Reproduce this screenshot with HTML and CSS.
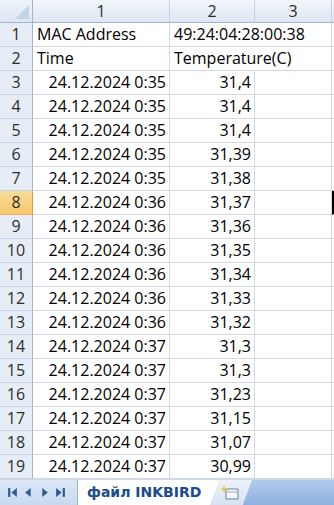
FILE: index.html
```html
<!DOCTYPE html>
<html lang="ru">
  <head>
    <meta charset="UTF-8" />
    <meta name="viewport" content="width=device-width, initial-scale=1.0" />
    <title>файл INKBIRD</title>
    <link rel="stylesheet" href="styles.css">
  </head>
  <body>
    <div class="sheet">
      <!-- column headers -->
      <div class="corner"><span class="corner-tri"></span></div>
      <div class="colhead">1</div>
      <div class="colhead">2</div>
      <div class="colhead">3</div>
      <div class="colhead"></div>

      <div class="rowhead">1</div>
      <div class="cell">MAC Address</div>
      <div class="cell spill">49:24:04:28:00:38</div>
      <div class="cell"></div>
      <div class="cell"></div>

      <div class="rowhead">2</div>
      <div class="cell">Time</div>
      <div class="cell spill">Temperature(C)</div>
      <div class="cell"></div>
      <div class="cell"></div>

      <div class="rowhead">3</div>
      <div class="cell num">24.12.2024 0:35</div>
      <div class="cell num">31,4</div>
      <div class="cell"></div>
      <div class="cell"></div>

      <div class="rowhead">4</div>
      <div class="cell num">24.12.2024 0:35</div>
      <div class="cell num">31,4</div>
      <div class="cell"></div>
      <div class="cell"></div>

      <div class="rowhead">5</div>
      <div class="cell num">24.12.2024 0:35</div>
      <div class="cell num">31,4</div>
      <div class="cell"></div>
      <div class="cell"></div>

      <div class="rowhead">6</div>
      <div class="cell num">24.12.2024 0:35</div>
      <div class="cell num">31,39</div>
      <div class="cell"></div>
      <div class="cell"></div>

      <div class="rowhead">7</div>
      <div class="cell num">24.12.2024 0:35</div>
      <div class="cell num">31,38</div>
      <div class="cell"></div>
      <div class="cell"></div>

      <div class="rowhead current">8</div>
      <div class="cell num">24.12.2024 0:36</div>
      <div class="cell num">31,37</div>
      <div class="cell"></div>
      <div class="cell active"></div>

      <div class="rowhead">9</div>
      <div class="cell num">24.12.2024 0:36</div>
      <div class="cell num">31,36</div>
      <div class="cell"></div>
      <div class="cell"></div>

      <div class="rowhead">10</div>
      <div class="cell num">24.12.2024 0:36</div>
      <div class="cell num">31,35</div>
      <div class="cell"></div>
      <div class="cell"></div>

      <div class="rowhead">11</div>
      <div class="cell num">24.12.2024 0:36</div>
      <div class="cell num">31,34</div>
      <div class="cell"></div>
      <div class="cell"></div>

      <div class="rowhead">12</div>
      <div class="cell num">24.12.2024 0:36</div>
      <div class="cell num">31,33</div>
      <div class="cell"></div>
      <div class="cell"></div>

      <div class="rowhead">13</div>
      <div class="cell num">24.12.2024 0:36</div>
      <div class="cell num">31,32</div>
      <div class="cell"></div>
      <div class="cell"></div>

      <div class="rowhead">14</div>
      <div class="cell num">24.12.2024 0:37</div>
      <div class="cell num">31,3</div>
      <div class="cell"></div>
      <div class="cell"></div>

      <div class="rowhead">15</div>
      <div class="cell num">24.12.2024 0:37</div>
      <div class="cell num">31,3</div>
      <div class="cell"></div>
      <div class="cell"></div>

      <div class="rowhead">16</div>
      <div class="cell num">24.12.2024 0:37</div>
      <div class="cell num">31,23</div>
      <div class="cell"></div>
      <div class="cell"></div>

      <div class="rowhead">17</div>
      <div class="cell num">24.12.2024 0:37</div>
      <div class="cell num">31,15</div>
      <div class="cell"></div>
      <div class="cell"></div>

      <div class="rowhead">18</div>
      <div class="cell num">24.12.2024 0:37</div>
      <div class="cell num">31,07</div>
      <div class="cell"></div>
      <div class="cell"></div>

      <div class="rowhead">19</div>
      <div class="cell num">24.12.2024 0:37</div>
      <div class="cell num">30,99</div>
      <div class="cell"></div>
      <div class="cell"></div>
    </div>

    <!-- sheet tabs -->
    <div class="tabbar">
      <div class="tabnav">
        <svg width="11" height="11" viewBox="0 0 10 10"><rect x="1" y="1" width="2" height="8" fill="#2f5a96"/><path d="M9 1 L4 5 L9 9 Z" fill="#2f5a96"/></svg>
        <svg width="11" height="11" viewBox="0 0 10 10"><path d="M7 1 L2 5 L7 9 Z" fill="#2f5a96"/></svg>
        <svg width="11" height="11" viewBox="0 0 10 10"><path d="M3 1 L8 5 L3 9 Z" fill="#2f5a96"/></svg>
        <svg width="11" height="11" viewBox="0 0 10 10"><path d="M1 1 L6 5 L1 9 Z" fill="#2f5a96"/><rect x="7" y="1" width="2" height="8" fill="#2f5a96"/></svg>
      </div>
      <div class="tab-active">файл INKBIRD</div>
      <div class="tab-insert">
        <svg width="22" height="18" viewBox="0 0 22 18">
          <path d="M6 5 H18 V15 H6 Z" fill="#f4f7fb" stroke="#6a7f9c" stroke-width="1"/>
          <path d="M6 8 H18" stroke="#9aaac0" stroke-width="1"/>
          <path d="M4 1 L5 4 L8 5 L5 6 L4 9 L3 6 L0 5 L3 4 Z" fill="#f4c33a"/>
        </svg>
      </div>
      <div class="tabfill"></div>
    </div>
  </body>
</html>
```

FILE: styles.css
```css
html,
body {
  overflow: hidden;
}
body {
  margin: 0;
  padding: 0;
  background-color: #fff;
  font-family: "Open Sans", "Liberation Sans", sans-serif;
  font-size: 16px;
  color: #000;
}

/* Grid of cells */
.sheet {
  display: grid;
  grid-template-columns: 33px 137px 85px 77px 1fr;
  grid-template-rows: 23px repeat(19, 24px);
}

.sheet > div {
  box-sizing: border-box;
  white-space: nowrap;
  line-height: 23px;
}

.corner {
  background: linear-gradient(#eef3fa, #dde6f2);
  border-right: 1px solid #9eb6ce;
  border-bottom: 1px solid #9eb6ce;
  position: relative;
}
.corner-tri {
  position: absolute;
  right: 3px;
  bottom: 3px;
  width: 0;
  height: 0;
  border-left: 14px solid transparent;
  border-bottom: 14px solid #c4d3e7;
}

.colhead {
  background: linear-gradient(#f2f6fb, #dfe7f2);
  border-right: 1px solid #c3d1e4;
  border-bottom: 1px solid #9eb6ce;
  text-align: center;
  color: #2d2d2d;
  line-height: 22px;
}

.rowhead {
  background-color: #e6edf7;
  border-right: 1px solid #9eb6ce;
  border-bottom: 1px solid #c5d3e6;
  text-align: center;
  color: #2d2d2d;
}
.rowhead.current {
  background: linear-gradient(#fbdc9c, #f5c66c);
  border-right: 1px solid #f29536;
  border-bottom: 1px solid #f2b25a;
}

.cell {
  border-right: 1px solid #d0d7e5;
  border-bottom: 1px solid #d0d7e5;
  padding: 0 4px;
}
.cell.num {
  text-align: right;
  padding: 0 3px 0 0;
}
.cell.spill {
  border-right-color: transparent;
}
.cell.active {
  border-left: 2px solid #000;
}

/* Sheet tabs */
.tabbar {
  display: flex;
  height: 26px;
  border-top: 1px solid #d0d7e5;
  box-sizing: border-box;
}

.tabnav {
  width: 78px;
  display: flex;
  align-items: center;
  gap: 5px;
  padding-left: 7px;
  box-sizing: border-box;
  background: linear-gradient(#dde8f6, #c8d9f0);
  border-right: 1px solid #9eb6ce;
}

.tab-active {
  width: 140px;
  padding-left: 9px;
  box-sizing: border-box;
  background-color: #fff;
  font-family: "DejaVu Sans", "Liberation Sans", sans-serif;
  font-weight: bold;
  font-size: 14px;
  line-height: 25px;
  color: #1a4b8c;
  clip-path: polygon(0 0, 100% 0, 94% 100%, 0 100%);
}

.tab-insert {
  width: 42px;
  margin-left: -8px;
  display: flex;
  align-items: center;
  justify-content: center;
  background: linear-gradient(#eef3fa, #d6e2f2);
  clip-path: polygon(22% 0, 100% 0, 78% 100%, 0 100%);
}

.tabfill {
  flex: 1;
  margin-left: -9px;
  background: linear-gradient(#b0cbee, #8fb1df);
}
```
